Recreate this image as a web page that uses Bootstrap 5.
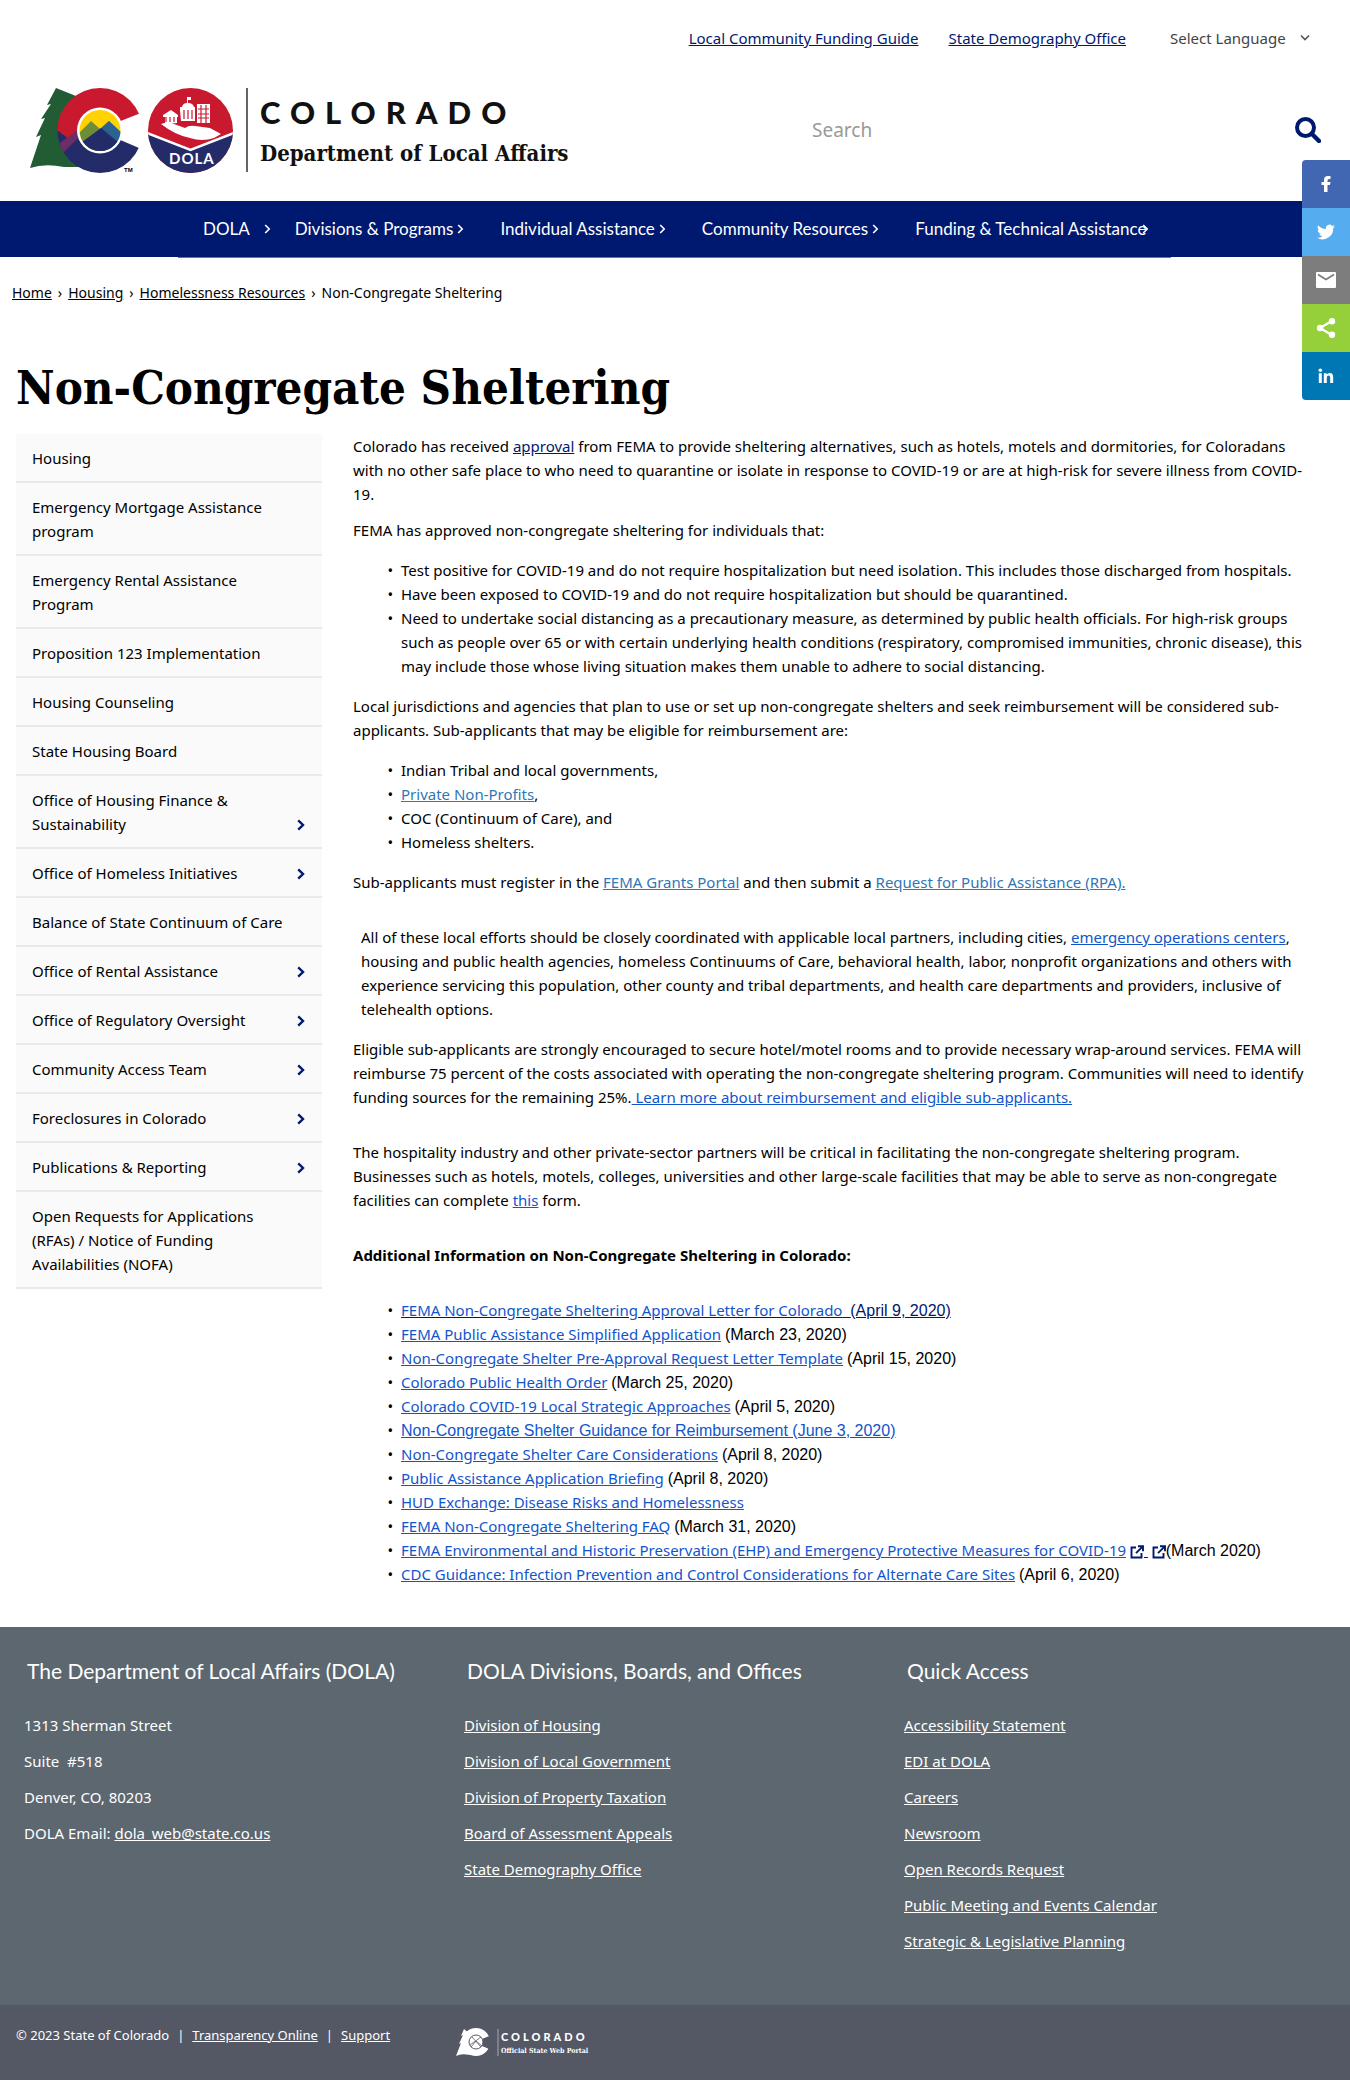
<!DOCTYPE html>
<html lang="en">
<head>
<meta charset="utf-8">
<meta name="viewport" content="width=device-width, initial-scale=1">
<title>Non-Congregate Sheltering | Department of Local Affairs</title>
<link href="https://cdn.jsdelivr.net/npm/bootstrap@5.3.0/dist/css/bootstrap.min.css" rel="stylesheet">
<style>
  :root { --navy: #001970; --link: #1155cc; --steel: #2f77b5; }
  body { font: 15px/24px "Noto Sans", "Open Sans", sans-serif; color: #000; background: #fff; }
  a { color: var(--navy); }
  .top-strip { height: 76px; padding: 0 38px 0 24px; gap: 30px; }
  .lang-box { position: relative; margin-left: 14px; }
  .lang-box select { appearance: none; border: 0; background: transparent; color: #444; width: 142px; padding: 0; }
  .lang-box svg { position: absolute; right: 2px; top: 8px; pointer-events: none; }
  .brand-row { height: 125px; padding: 0 29px 0 26px; }
  .site-logo { width: 560px; height: 92px; margin-top: 9px; }
  .search-form { width: 509px; height: 48px; margin-top: 30px; }
  .search-form input { font-size: 19px; border: 0; padding: 0; color: #444; background: transparent; box-shadow: none; }
  .search-form input::placeholder { color: #999; opacity: 1; }
  .search-form button { border: 0; background: transparent; padding: 0; line-height: 1; }
  .main-nav { background: var(--navy); height: 56px; }
  .main-nav ul { width: 993px; height: 57px; margin-left: 178px; padding-left: 25px; border-bottom: 1px solid #5b74b5; }
  .main-nav li { margin-right: 36px; }
  .main-nav li:first-child { margin-right: 24px; }
  .main-nav li:first-child a { gap: 14px; }
  .main-nav li:last-child { margin-right: 0; }
  .main-nav li:last-child a { gap: 0; }
  .main-nav li:last-child svg { margin-left: -4px; }
  .main-nav a { font: 17px/24px Lato, sans-serif; color: #fff; text-decoration: none; gap: 4px; }
  .crumbs { font-size: 14px; padding: 24px 12px 0; gap: 6px; }
  .crumbs a { color: #000; }
  h1 { font: bold 47px/56px "DejaVu Serif Condensed", "DejaVu Serif", serif; margin: 55px 0 18px; }
  .page-body { padding: 0 40px 0 16px; }
  .side-menu { width: 306px; flex: none; background: #fafafa; }
  .side-menu a { color: #000; text-decoration: none; padding: 12px 17px 11px 16px; border-bottom: 2px solid #e9e9e9; }
  .side-menu a.wrap-early { padding-right: 48px; }
  .side-menu svg { margin-bottom: 5px; flex: none; }
  .article-text { padding-left: 31px; min-width: 0; flex: 1; }
  .article-text p { margin-bottom: 16px; }
  .article-text p.gap-tight { margin-bottom: 12px; }
  .article-text p.gap-wide { margin-bottom: 31px; }
  .article-text ul { margin-bottom: 16px; padding-left: 48px; list-style-type: "•\a0\a0"; }
  .article-text .lnk { color: var(--link); }
  .article-text .lnk-steel { color: var(--steel); }
  .article-text svg { vertical-align: -3px; }
  .arial { font-family: "Liberation Sans", Arial, sans-serif; font-size: 16px; line-height: 16px; }
  .share-rail { position: absolute; right: 0; top: 160px; width: 48px; border-radius: 4px 0 0 4px; overflow: hidden; }
  .share-rail a { height: 48px; }
  .share-fb { background: #4267b2; }
  .share-tw { background: #55acee; }
  .share-mail { background: #7d7d7d; }
  .share-any { background: #95d03a; }
  .share-li { background: #0077b5; }
  .foot-main { background: #5c6770; color: #fff; margin-top: 41px; padding: 28px 0 0 24px; height: 378px; }
  .foot-main a, .foot-base a { color: #fff; }
  .foot-main h2 { font: 21px/32px Lato, sans-serif; margin: 0 0 26px 3px; }
  .foot-main p, .foot-main li { line-height: 24px; margin-bottom: 12px; }
  .foot-col { width: 440px; }
  .foot-base { background: #545864; color: #fff; height: 75px; font-size: 13px; padding-left: 16px; }
</style>
<script src="https://cdn.jsdelivr.net/npm/bootstrap@5.3.0/dist/js/bootstrap.bundle.min.js"></script>
</head>
<body class="position-relative">
<svg width="0" height="0" class="position-absolute" aria-hidden="true">
  <symbol id="chev" viewBox="0 0 7 10"><path d="M1.2 1l4 4-4 4" fill="none" stroke="currentColor" stroke-width="1.6"/></symbol>
  <symbol id="chevb" viewBox="0 0 8 12"><path d="M1.2 1.4L6 6l-4.800 4.600" fill="none" stroke="#001970" stroke-width="2.400"/></symbol>
  <symbol id="ext" viewBox="0 0 14 14"><path d="M6 2.500H1.500v10h10V8M8 1.200h5v5M12.600 1.600L6 8.200" fill="none" stroke="#001970" stroke-width="1.900"/></symbol>
</svg>

<header>
  <div class="top-strip d-flex align-items-center justify-content-end">
    <a href="#">Local Community Funding Guide</a>
    <a href="#">State Demography Office</a>
    <div class="lang-box">
      <select aria-label="Language"><option>Select Language</option><option>Español</option></select>
      <svg width="10" height="8" viewBox="0 0 10 8"><path d="M1 1.500l4 4 4-4" fill="none" stroke="#555" stroke-width="1.600"/></svg>
    </div>
  </div>
  <div class="brand-row d-flex justify-content-between align-items-start">
    <a href="#" aria-label="Colorado Department of Local Affairs">
      <svg class="site-logo" viewBox="26 85 560 92">
        <defs>
          <clipPath id="seal"><circle cx="190.500" cy="130.500" r="42.500"/></clipPath>
          <clipPath id="sun"><circle cx="100" cy="130.500" r="20.500"/></clipPath>
          <clipPath id="ring"><circle cx="100" cy="130.500" r="42.500"/></clipPath>
        </defs>
        <path d="M56 88l-9 17 4-1-10 15 4-1-9 19 5-2-11 33q15-5 34-1l22 0V100z" fill="#215c34"/>
        <g clip-path="url(#ring)">
          <rect x="57" y="87" width="86" height="44" fill="#c8192f"/>
          <path d="M57 131h86v43H57z" fill="#232b69"/>
          <path d="M57 130l13 10 14-15-7-15-20 4z" fill="#c8192f"/>
          <path d="M57 145l22-16v8l-20 20z" fill="#6d2d66"/>
        </g>
        <path d="M118 122l28-11v40l-28-12z" fill="#fff"/>
        <circle cx="100" cy="130.500" r="23" fill="#fff"/>
        <g clip-path="url(#sun)">
          <rect x="78" y="108" width="46" height="46" fill="#ffd200"/>
          <path d="M76 136l15-15 9 8 9-8 16 15v20H76z" fill="#6f8c36"/>
          <path d="M99 130l10-9 16 15v20H99z" fill="#2a638f"/>
          <path d="M78 145l23-17 23 19v10H78z" fill="#232b69"/>
        </g>
        <text x="124" y="172" font-family="Liberation Sans" font-size="6" font-weight="bold">TM</text>
        <g clip-path="url(#seal)">
          <rect x="147" y="87" width="87" height="87" fill="#c8192f"/>
          <path d="M147 133l43.500 17 43.500-17v42h-87z" fill="#232b69"/>
          <path d="M147 133l43.500 17 43.500-17" fill="none" stroke="#fff" stroke-width="2.500"/>
        </g>
        <g fill="#fff">
          <path d="M163 115l8-5 7 5v2h-1v6l-12 1v-7h-2zM180 110v-3h2q1-4 5-4v-6h4v3h-3v3q5 0 6 4h1v14h-14z"/>
          <path d="M197 104h13v19h-13z"/>
          <path d="M161 124q7-3 13 0l11 4q4-3 10-2l15 2 11 6-7 4q-12 4-24 0-15-3-29-14z"/>
        </g>
        <path d="M166 117v5M170 117v5M174 117v5M184 110v9M188 110v9M192 110v9M201 105v18M206 105v18M198 109h11M198 114h11M198 118h11" stroke="#c8192f" stroke-width="1.200"/>
        <text x="169" y="164" fill="#fff" font-family="Lato" font-weight="bold" font-size="15" letter-spacing="1">DOLA</text>
        <path d="M247 88v84" stroke="#222" stroke-width="1.400"/>
        <text x="260" y="124" font-family="Lato" font-weight="900" font-size="31" letter-spacing="10" fill="#111">COLORADO</text>
        <text x="260" y="161" font-family="DejaVu Serif Condensed" font-weight="bold" font-size="22" fill="#111">Department of Local Affairs</text>
      </svg>
    </a>
    <form class="search-form d-flex align-items-center justify-content-between" role="search">
      <input type="search" class="form-control" placeholder="Search" aria-label="Search">
      <button type="button" aria-label="Search">
        <svg width="26" height="26" viewBox="0 0 26 26"><circle cx="10.500" cy="10.500" r="8.500" fill="none" stroke="#001970" stroke-width="4"/><path d="M17 17l7 7" stroke="#001970" stroke-width="4.400" stroke-linecap="round"/></svg>
      </button>
    </form>
  </div>
  <nav class="main-nav" aria-label="Main">
    <ul class="d-flex align-items-center list-unstyled mb-0 text-nowrap">
      <li><a class="d-flex align-items-center" href="#">DOLA<svg width="7" height="10"><use href="#chev"/></svg></a></li>
      <li><a class="d-flex align-items-center" href="#">Divisions &amp; Programs<svg width="7" height="10"><use href="#chev"/></svg></a></li>
      <li><a class="d-flex align-items-center" href="#">Individual Assistance<svg width="7" height="10"><use href="#chev"/></svg></a></li>
      <li><a class="d-flex align-items-center" href="#">Community Resources<svg width="7" height="10"><use href="#chev"/></svg></a></li>
      <li><a class="d-flex align-items-center" href="#">Funding &amp; Technical Assistance<svg width="7" height="10"><use href="#chev"/></svg></a></li>
    </ul>
  </nav>
</header>

<div class="share-rail d-flex flex-column">
  <a href="#" aria-label="Facebook" class="share-fb d-flex align-items-center justify-content-center"><svg width="24" height="24" viewBox="0 0 24 24"><path d="M10 20v-7H7.500v-3H10V8q0-4 4-4h2.500v3H15q-1.500 0-1.500 1.500V10h3l-.5 3h-2.500v7z" fill="#fff"/></svg></a>
  <a href="#" aria-label="Twitter" class="share-tw d-flex align-items-center justify-content-center"><svg width="18" height="18" viewBox="0 0 24 24"><path d="M24 4.600a10 10 0 0 1-2.800.8 5 5 0 0 0 2.100-2.700 10 10 0 0 1-3.100 1.200 4.900 4.900 0 0 0-8.400 4.500A14 14 0 0 1 1.700 3.100a4.900 4.900 0 0 0 1.500 6.600 5 5 0 0 1-2.200-.6 4.900 4.900 0 0 0 3.900 4.900 5 5 0 0 1-2.200.1 4.900 4.900 0 0 0 4.600 3.400A10 10 0 0 1 0 19.500a14 14 0 0 0 21.500-12.400A10 10 0 0 0 24 4.600z" fill="#fff"/></svg></a>
  <a href="#" aria-label="Email" class="share-mail d-flex align-items-center justify-content-center"><svg width="20" height="16" viewBox="0 0 20 16"><rect width="20" height="16" rx="1" fill="#fff"/><path d="M2 2.500l8 5 8-5" fill="none" stroke="#7d7d7d" stroke-width="1.800"/></svg></a>
  <a href="#" aria-label="Share" class="share-any d-flex align-items-center justify-content-center"><svg width="20" height="20" viewBox="0 0 20 20"><path d="M16 3L4 10l12 7" fill="none" stroke="#fff" stroke-width="2.400"/><g fill="#fff"><circle cx="16" cy="3.300" r="3.200"/><circle cx="4" cy="10" r="3.200"/><circle cx="16" cy="16.700" r="3.200"/></g></svg></a>
  <a href="#" aria-label="LinkedIn" class="share-li d-flex align-items-center justify-content-center"><svg width="16" height="16" viewBox="0 0 16 16" fill="#fff"><circle cx="2.300" cy="2.300" r="1.800"/><path d="M.8 5.300h3V15h-3zM5.800 5.300h2.900v1.300q1-1.600 3-1.600 3.500 0 3.500 4.300V15h-3V9.900q0-2.300-1.600-2.300-1.800 0-1.800 2.300V15h-3z"/></svg></a>
</div>

<nav class="crumbs d-flex text-nowrap" aria-label="Breadcrumb">
  <a href="#">Home</a><span>›</span><a href="#">Housing</a><span>›</span><a href="#">Homelessness Resources</a><span>›</span><span>Non-Congregate Sheltering</span>
</nav>

<main class="page-body">
  <h1>Non-Congregate Sheltering</h1>
  <div class="d-flex align-items-start">
    <nav class="side-menu d-flex flex-column" aria-label="Housing">
      <a href="#">Housing</a>
      <a href="#" class="wrap-early">Emergency Mortgage Assistance program</a>
      <a href="#" class="wrap-early">Emergency Rental Assistance Program</a>
      <a href="#">Proposition 123 Implementation</a>
      <a href="#">Housing Counseling</a>
      <a href="#">State Housing Board</a>
      <a href="#" class="d-flex justify-content-between align-items-end"><span>Office of Housing Finance &amp; Sustainability</span><svg width="8" height="12"><use href="#chevb"/></svg></a>
      <a href="#" class="d-flex justify-content-between align-items-end">Office of Homeless Initiatives<svg width="8" height="12"><use href="#chevb"/></svg></a>
      <a href="#">Balance of State Continuum of Care</a>
      <a href="#" class="d-flex justify-content-between align-items-end">Office of Rental Assistance<svg width="8" height="12"><use href="#chevb"/></svg></a>
      <a href="#" class="d-flex justify-content-between align-items-end">Office of Regulatory Oversight<svg width="8" height="12"><use href="#chevb"/></svg></a>
      <a href="#" class="d-flex justify-content-between align-items-end">Community Access Team<svg width="8" height="12"><use href="#chevb"/></svg></a>
      <a href="#" class="d-flex justify-content-between align-items-end">Foreclosures in Colorado<svg width="8" height="12"><use href="#chevb"/></svg></a>
      <a href="#" class="d-flex justify-content-between align-items-end">Publications &amp; Reporting<svg width="8" height="12"><use href="#chevb"/></svg></a>
      <a href="#" class="wrap-early">Open Requests for Applications (RFAs) / Notice of Funding Availabilities (NOFA)</a>
    </nav>
    <article class="article-text">
      <p class="gap-tight">Colorado has received <a href="#">approval</a> from FEMA to provide sheltering alternatives, such as hotels, motels and dormitories, for Coloradans with no other safe place to who need to quarantine or isolate in response to COVID-19 or are at high-risk for severe illness from COVID-19.</p>
      <p>FEMA has approved non-congregate sheltering for individuals that:</p>
      <ul>
        <li>Test positive for COVID-19 and do not require hospitalization but need isolation. This includes those discharged from hospitals.</li>
        <li>Have been exposed to COVID-19 and do not require hospitalization but should be quarantined.</li>
        <li>Need to undertake social distancing as a precautionary measure, as determined by public health officials. For high-risk groups such as people over 65 or with certain underlying health conditions (respiratory, compromised immunities, chronic disease), this may include those whose living situation makes them unable to adhere to social distancing.</li>
      </ul>
      <p>Local jurisdictions and agencies that plan to use or set up non-congregate shelters and seek reimbursement will be considered sub-applicants. Sub-applicants that may be eligible for reimbursement are:</p>
      <ul>
        <li>Indian Tribal and local governments,</li>
        <li><a href="#" class="lnk-steel">Private Non-Profits</a>,</li>
        <li>COC (Continuum of Care), and</li>
        <li>Homeless shelters.</li>
      </ul>
      <p class="gap-wide">Sub-applicants must register in the <a href="#" class="lnk-steel">FEMA Grants Portal</a> and then submit a <a href="#" class="lnk-steel">Request for Public Assistance (RPA).</a></p>
      <p class="ps-2">All of these local efforts should be closely coordinated with applicable local partners, including cities, <a href="#" class="lnk">emergency operations centers</a>, housing and public health agencies, homeless Continuums of Care, behavioral health, labor, nonprofit organizations and others with experience servicing this population, other county and tribal departments, and health care departments and providers, inclusive of telehealth options.</p>
      <p class="gap-wide">Eligible sub-applicants are strongly encouraged to secure hotel/motel rooms and to provide necessary wrap-around services. FEMA will reimburse 75 percent of the costs associated with operating the non-congregate sheltering program. Communities will need to identify funding sources for the remaining 25%.<a href="#" class="lnk"> Learn more about reimbursement and eligible sub-applicants.</a></p>
      <p class="gap-wide">The hospitality industry and other private-sector partners will be critical in facilitating the non-congregate sheltering program. Businesses such as hotels, motels, colleges, universities and other large-scale facilities that may be able to serve as non-congregate facilities can complete <a href="#" class="lnk">this</a> form.</p>
      <p class="gap-wide"><b>Additional Information on Non-Congregate Sheltering in Colorado:</b></p>
      <ul class="mb-0">
        <li><a href="#"><span class="lnk">FEMA Non-Congregate Sheltering Approval Letter for Colorado</span>&nbsp; <span class="arial">(April 9, 2020)</span></a></li>
        <li><a href="#" class="lnk">FEMA Public Assistance Simplified Application</a> <span class="arial">(March 23, 2020)</span></li>
        <li><a href="#" class="lnk">Non-Congregate Shelter Pre-Approval Request Letter Template</a> <span class="arial">(April 15, 2020)</span></li>
        <li><a href="#" class="lnk">Colorado Public Health Order</a> <span class="arial">(March 25, 2020)</span></li>
        <li><a href="#" class="lnk">Colorado COVID-19 Local Strategic Approaches</a> <span class="arial">(April 5, 2020)</span></li>
        <li><a href="#" class="lnk arial">Non-Congregate Shelter Guidance for Reimbursement (June 3, 2020)</a></li>
        <li><a href="#" class="lnk">Non-Congregate Shelter Care Considerations</a> <span class="arial">(April 8, 2020)</span></li>
        <li><a href="#" class="lnk">Public Assistance Application Briefing</a> <span class="arial">(April 8, 2020)</span></li>
        <li><a href="#" class="lnk">HUD Exchange: Disease Risks and Homelessness</a></li>
        <li><a href="#" class="lnk">FEMA Non-Congregate Sheltering FAQ</a> <span class="arial">(March 31, 2020)</span></li>
        <li class="text-nowrap"><a href="#" class="lnk">FEMA Environmental and Historic Preservation (EHP) and Emergency Protective Measures for COVID-19</a> <svg width="14" height="14"><use href="#ext"/></svg><a href="#">&nbsp;</a> <svg width="14" height="14"><use href="#ext"/></svg><span class="arial">(March 2020)</span></li>
        <li><a href="#" class="lnk">CDC Guidance: Infection Prevention and Control Considerations for Alternate Care Sites</a> <span class="arial">(April 6, 2020)</span></li>
      </ul>
    </article>
  </div>
</main>

<footer>
  <div class="foot-main d-flex">
    <section class="foot-col flex-shrink-0">
      <h2>The Department of Local Affairs (DOLA)</h2>
      <p>1313 Sherman Street</p>
      <p>Suite&nbsp; #518</p>
      <p>Denver, CO, 80203</p>
      <p>DOLA Email: <a href="#">dola_web@state.co.us</a></p>
    </section>
    <section class="foot-col flex-shrink-0">
      <h2>DOLA Divisions, Boards, and Offices</h2>
      <ul class="list-unstyled">
        <li><a href="#">Division of Housing</a></li>
        <li><a href="#">Division of Local Government</a></li>
        <li><a href="#">Division of Property Taxation</a></li>
        <li><a href="#">Board of Assessment Appeals</a></li>
        <li><a href="#">State Demography Office</a></li>
      </ul>
    </section>
    <section class="foot-col flex-shrink-0">
      <h2>Quick Access</h2>
      <ul class="list-unstyled">
        <li><a href="#">Accessibility Statement</a></li>
        <li><a href="#">EDI at DOLA</a></li>
        <li><a href="#">Careers</a></li>
        <li><a href="#">Newsroom</a></li>
        <li><a href="#">Open Records Request</a></li>
        <li><a href="#">Public Meeting and Events Calendar</a></li>
        <li><a href="#">Strategic &amp; Legislative Planning</a></li>
      </ul>
    </section>
  </div>
  <div class="foot-base d-flex align-items-center">
    <div class="foot-col d-flex gap-2 pb-3">
      <span>© 2023 State of Colorado</span><span>|</span><a href="#">Transparency Online</a><span>|</span><a href="#">Support</a>
    </div>
    <a href="#" aria-label="Colorado Official State Web Portal">
      <svg width="140" height="30" viewBox="0 0 140 30">
        <path d="M8 1L5 8l2-1-4 9 2-1L0 28q5-3 14-1V6z" fill="#fff"/>
        <circle cx="20" cy="14" r="10" fill="none" stroke="#fff" stroke-width="8"/>
        <path d="M26 11l12-5v17l-12-5z" fill="#545864"/>
        <circle cx="20" cy="14" r="7" fill="#fff" stroke="#545864"/>
        <path d="M14 17l11-8M16 9l9 10M15 19l5-6 6 5" stroke="#545864" stroke-width=".8" fill="none"/>
        <path d="M42 1v27" stroke="#a5a8b0"/>
        <text x="45" y="13" fill="#fff" font-family="Lato" font-weight="900" font-size="11" letter-spacing="3">COLORADO</text>
        <text x="45" y="25" fill="#fff" font-family="DejaVu Serif Condensed" font-weight="bold" font-size="7">Official State Web Portal</text>
      </svg>
    </a>
  </div>
</footer>
</body>
</html>
